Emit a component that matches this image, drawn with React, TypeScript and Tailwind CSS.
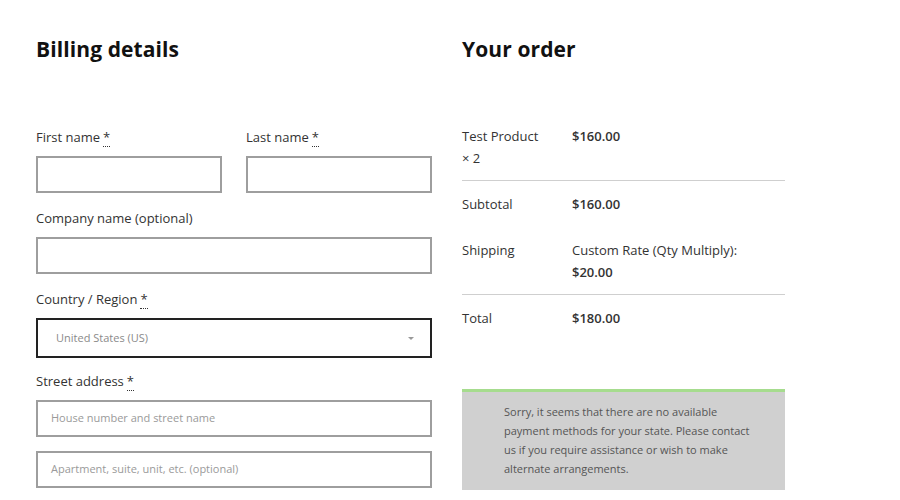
import React from "react";

const Req = () => (
  <abbr className="no-underline border-b border-dotted border-[#333] leading-none ml-[3px] text-[#333]" title="required">*</abbr>
);

const Label = ({ children }: { children: React.ReactNode }) => (
  <div className="text-[13px] leading-[20px] text-[#333] h-[20px] mb-[9px]">{children}</div>
);

const Input = ({ placeholder, className = "" }: { placeholder?: string; className?: string }) => (
  <div className={`h-[37px] border-2 border-[#9e9e9e] flex items-center px-[13px] text-[11px] text-[#9a9a9a] ${className}`}>
    {placeholder}
  </div>
);

export default function App() {
  return (
    <div className="w-[900px] h-[500px] bg-white overflow-hidden" style={{ fontFamily: '"Open Sans", "Noto Sans", sans-serif' }}>
      <div className="flex pl-[36px] pt-[35px] gap-[30px]">
        <div className="w-[396px]">
          <h3 className="text-[21px] leading-[28px] font-bold text-[#111] tracking-[0.1px]">Billing details</h3>
          <div className="mt-[64px] flex flex-col gap-[15px]">
            <div className="flex gap-[24px]">
              <div className="flex-1">
                <Label>First name<Req /></Label>
                <Input />
              </div>
              <div className="flex-1">
                <Label>Last name<Req /></Label>
                <Input />
              </div>
            </div>
            <div>
              <Label>Company name (optional)</Label>
              <Input />
            </div>
            <div>
              <Label>Country / Region<Req /></Label>
              <div className="h-[40px] border-2 border-[#222] flex items-center justify-between pl-[18px] pr-[16px] text-[11px] text-[#8a8a8a]">
                <span>United States (US)</span>
                <span className="w-0 h-0 border-l-[3px] border-r-[3px] border-t-[3px] border-l-transparent border-r-transparent border-t-[#999]" />
              </div>
            </div>
            <div className="-mt-[2px]">
              <Label>Street address<Req /></Label>
              <Input placeholder="House number and street name" />
              <Input placeholder="Apartment, suite, unit, etc. (optional)" className="mt-[14px]" />
            </div>
          </div>
        </div>
        <div className="w-[323px]">
          <h3 className="text-[21px] leading-[28px] font-bold text-[#111] tracking-[0.1px]">Your order</h3>
          <div className="mt-[62px] text-[13px] leading-[22px] text-[#333]">
            <div className="flex pb-[11px] border-b border-[#cfcfcf]">
              <div className="w-[110px]">Test Product<br /><span>× 2</span></div>
              <div className="font-semibold">$160.00</div>
            </div>
            <div className="flex pt-[12px] pb-[12px]">
              <div className="w-[110px]">Subtotal</div>
              <div className="font-semibold">$160.00</div>
            </div>
            <div className="flex pt-[12px] pb-[11px] border-b border-[#cfcfcf]">
              <div className="w-[110px]">Shipping</div>
              <div>Custom Rate (Qty Multiply):<br /><span className="font-semibold">$20.00</span></div>
            </div>
            <div className="flex pt-[12px] pb-[12px]">
              <div className="w-[110px]">Total</div>
              <div className="font-semibold">$180.00</div>
            </div>
          </div>
          <div className="mt-[48px] bg-[#d0d0d0] border-t-[3px] border-[#a6dc8e] pl-[42px] pr-[24px] pt-[10px] pb-[12px] text-[11px] leading-[19px] text-[#555]">
            Sorry, it seems that there are no available payment methods for your state. Please contact us if you require assistance or wish to make alternate arrangements.
          </div>
        </div>
      </div>
    </div>
  );
}
